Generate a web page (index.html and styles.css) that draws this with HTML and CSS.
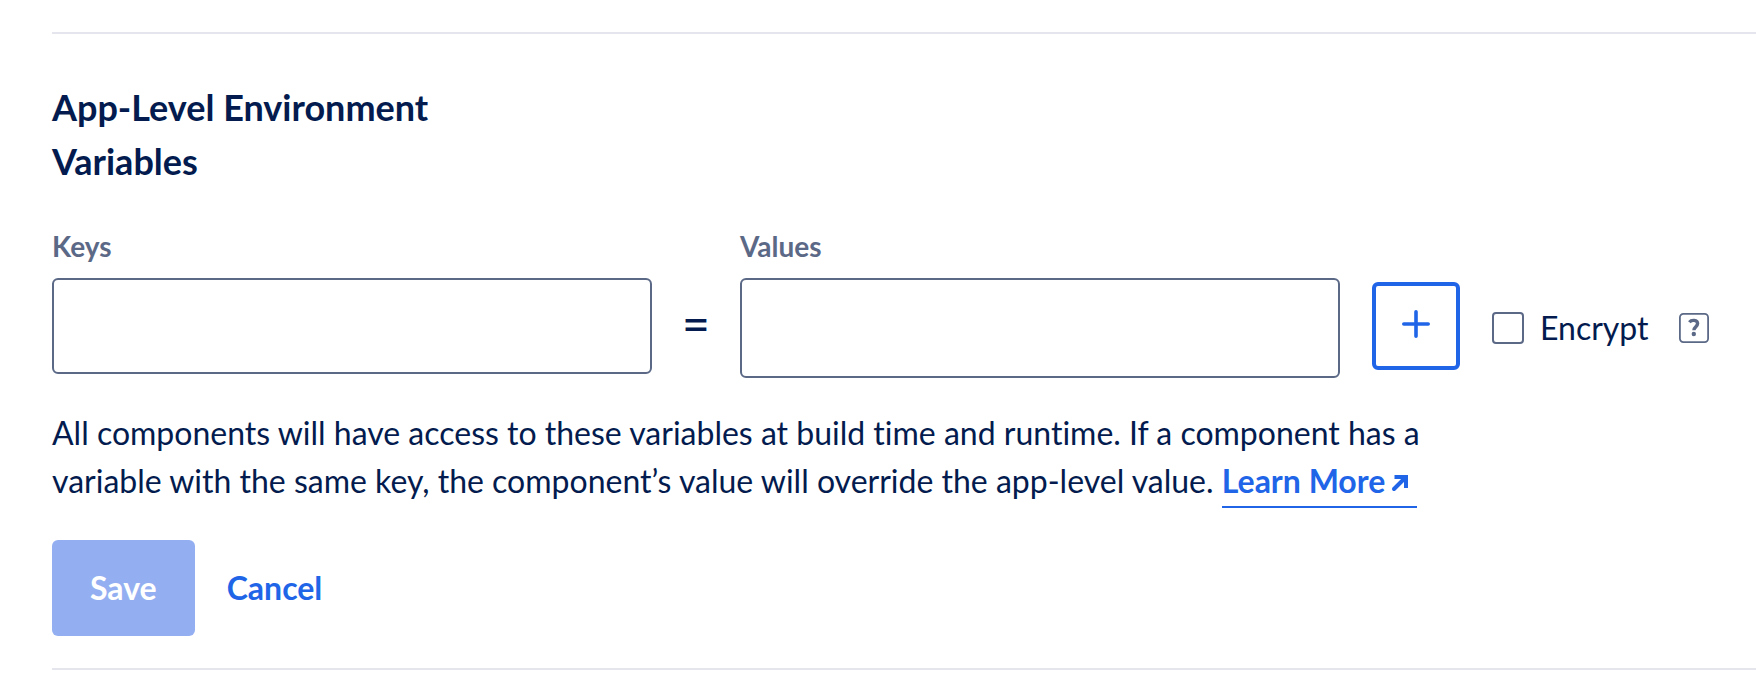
FILE: index.html
```html
<!DOCTYPE html>
<html lang="en">
<head>
<meta charset="utf-8">
<title>App-Level Environment Variables</title>
<meta name="viewport" content="width=device-width, initial-scale=1">
<link rel="stylesheet" href="styles.css">
</head>
<body>
<main class="settings">
  <form class="env-form">
    <h2 class="env-title">App-Level Environment Variables</h2>
    <div class="env-row">
      <div class="field">
        <label class="field-label" for="env-key">Keys</label>
        <input class="field-input" id="env-key" type="text">
      </div>
      <span class="equals">=</span>
      <div class="field">
        <label class="field-label" for="env-value">Values</label>
        <textarea class="field-input field-input-value" id="env-value" rows="1"></textarea>
      </div>
      <button class="add-button" type="button" aria-label="Add variable">
        <svg class="add-icon" viewBox="0 0 28 28" aria-hidden="true"><path d="M14 1.8v24.4M1.8 14h24.4"/></svg>
      </button>
      <div class="encrypt">
        <input class="checkbox" id="encrypt" type="checkbox">
        <label class="encrypt-label" for="encrypt">Encrypt</label>
      </div>
      <button class="help-button" type="button" aria-label="About encryption">
        <svg class="help-icon" viewBox="0 0 30 30" aria-hidden="true">
          <rect x="0.9" y="0.9" width="28.2" height="28.2" rx="3.5"/>
          <path class="help-mark" d="M10.4 9.2C12.4 6.6 18.6 6.6 18.6 10.6C18.6 13.6 15 13.8 14.9 17.2"/>
          <circle class="help-dot" cx="14.8" cy="21" r="2.2"/>
        </svg>
      </button>
    </div>
    <p class="env-note">All components will have access to these variables at build time and runtime. If a component has a variable with the same key, the component’s value will override the app-level value. <a class="learn-more" href="#">Learn More<svg class="arrow-icon" viewBox="0 0 18 18" aria-hidden="true"><path stroke-linecap="round" d="M3 14L13 4"/><path d="M3.5 2H15V13"/></svg></a></p>
    <div class="actions">
      <button class="save-button" type="submit" disabled>Save</button>
      <button class="cancel-button" type="button">Cancel</button>
    </div>
  </form>
</main>
</body>
</html>
```
FILE: styles.css
```css
* {
  box-sizing: border-box;
}

body {
  margin: 0;
  background: #fff;
  color: #031b4e;
  font-family: Lato, "Open Sans", sans-serif;
  font-size: 32px;
  font-variant-ligatures: none;
  line-height: 48px;
}

button,
input,
textarea {
  font: inherit;
  color: inherit;
}

.settings {
  padding: 32px 0 28px 52px;
}

.env-form {
  padding: 46px 0 32px;
  border-top: 2px solid #e5e6ed;
  border-bottom: 2px solid #e5e6ed;
}

.env-title {
  max-width: 440px;
  margin: 0 0 36px;
  font-size: 36px;
  font-weight: 700;
  line-height: 54px;
}

.env-row {
  display: flex;
  align-items: flex-end;
  padding-right: 47px;
}

.field {
  display: flex;
  flex: 0 1 600px;
  flex-direction: column;
  align-self: flex-start;
  min-width: 0;
}

.field-label {
  margin-bottom: 10px;
  color: #5b6987;
  font-size: 28px;
  font-weight: 700;
  line-height: 44px;
}

.field-input {
  width: 100%;
  height: 96px;
  padding: 22px 24px;
  border: 2px solid #5b6987;
  border-radius: 6px;
  background: #fff;
  outline: none;
  resize: none;
}

.field-input-value {
  height: 100px;
}

.equals {
  display: flex;
  flex: none;
  align-items: center;
  justify-content: center;
  width: 88px;
  height: 100px;
  padding-bottom: 10px;
  font-size: 48px;
  font-weight: 500;
}

.add-button {
  display: flex;
  flex: none;
  align-items: center;
  justify-content: center;
  width: 88px;
  height: 88px;
  margin: 0 32px 8px;
  padding: 0 0 4px;
  border: 4px solid #2065e8;
  border-radius: 6px;
  background: #fff;
}

.add-icon {
  width: 28px;
  height: 28px;
  fill: none;
  stroke: #2065e8;
  stroke-width: 3.6;
  stroke-linecap: round;
}

.encrypt {
  display: flex;
  align-items: center;
  gap: 16px;
  height: 100px;
}

.checkbox {
  flex: none;
  width: 32px;
  height: 32px;
  margin: 0;
  border: 2px solid #5b6987;
  border-radius: 4px;
  background: #fff;
  appearance: none;
}

.checkbox:checked {
  background: #2065e8;
}

.help-button {
  display: flex;
  align-items: center;
  height: 100px;
  margin-left: auto;
  padding: 0;
  border: 0;
  background: none;
}

.help-icon {
  width: 30px;
  height: 30px;
  fill: none;
  stroke: #5b6987;
  stroke-width: 1.8;
}

.help-icon .help-mark {
  stroke-width: 3.4;
}

.help-icon .help-dot {
  fill: #5b6987;
  stroke: none;
}

.env-note {
  max-width: 1400px;
  margin: 31px 0 35px;
}

.learn-more {
  padding: 0 8px 6px 0;
  border-bottom: 2px solid #2065e8;
  color: #2065e8;
  font-weight: 700;
  text-decoration: none;
  white-space: nowrap;
}

.arrow-icon {
  width: 18px;
  height: 18px;
  margin-left: 6px;
  fill: none;
  stroke: #2065e8;
  stroke-width: 4;
}

.actions {
  display: flex;
  gap: 32px;
}

.save-button,
.cancel-button {
  height: 96px;
  border: 0;
  border-radius: 6px;
  font-weight: 700;
}

.save-button {
  padding: 0 38px;
  background: #94aff1;
  color: #fff;
}

.cancel-button {
  padding: 0;
  background: none;
  color: #2065e8;
}
```
